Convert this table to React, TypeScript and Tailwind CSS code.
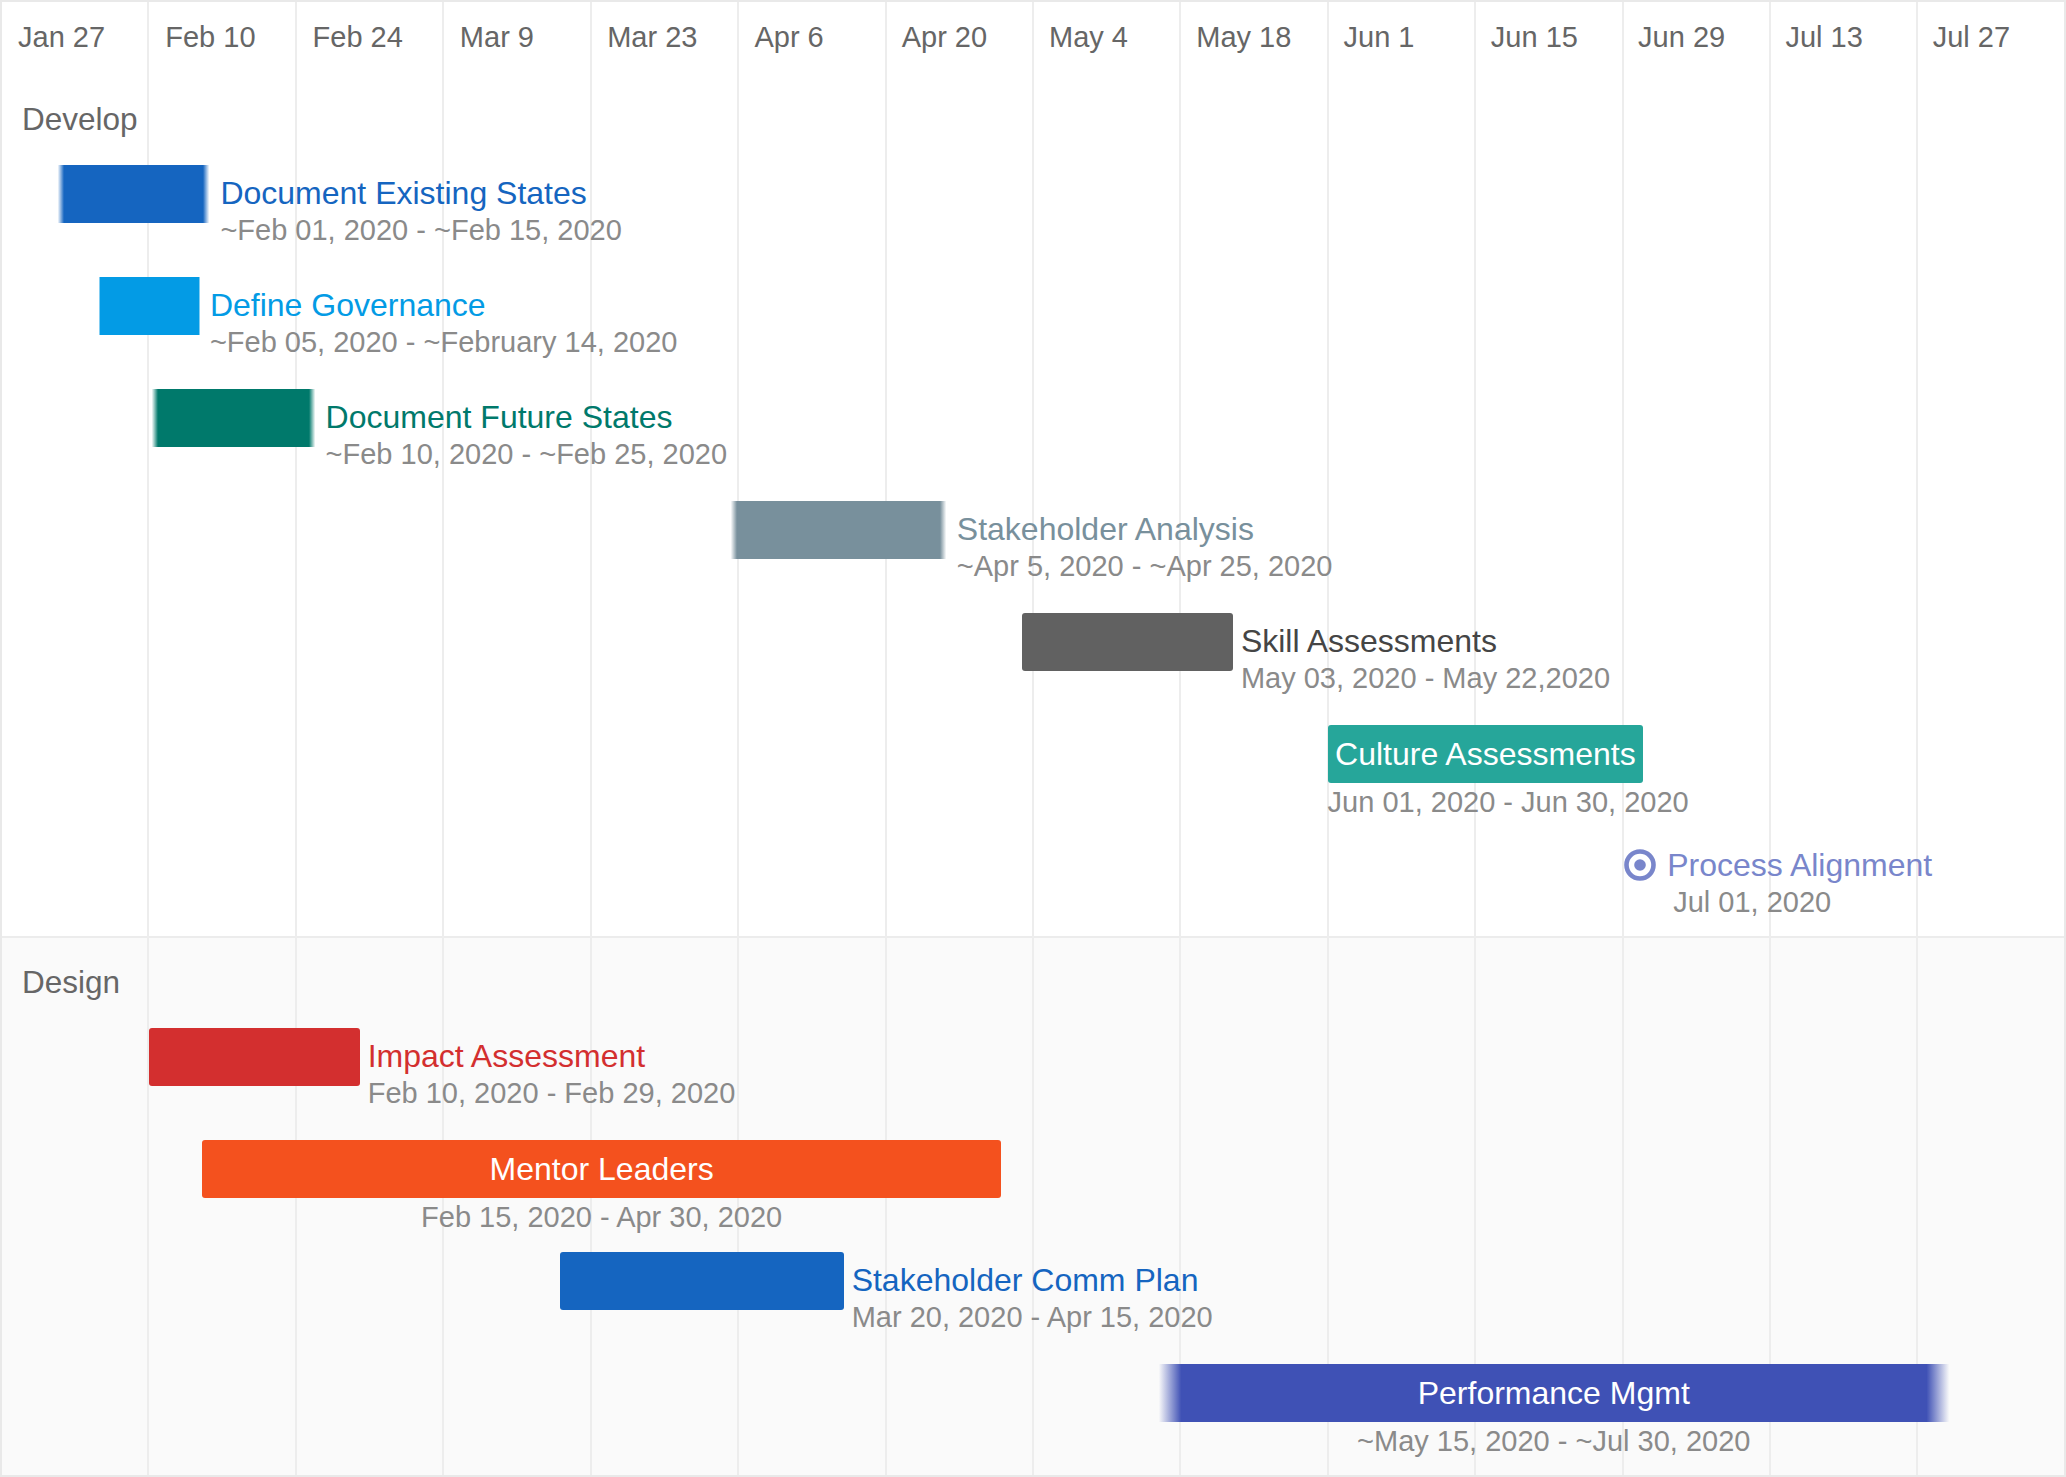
import React from "react";

const DAY_PX = 2062 / 14 / 14;
const ORIGIN = Date.UTC(2020, 0, 27);

const HEADER = [
  "Jan 27",
  "Feb 10",
  "Feb 24",
  "Mar 9",
  "Mar 23",
  "Apr 6",
  "Apr 20",
  "May 4",
  "May 18",
  "Jun 1",
  "Jun 15",
  "Jun 29",
  "Jul 13",
  "Jul 27",
];

type Task = {
  title: string;
  dates: string;
  start: [number, number];
  end?: [number, number];
  color: string;
  textColor?: string;
  fuzzy?: boolean;
  approx?: boolean;
  rounded?: boolean;
  inside?: boolean;
  dateAlign?: "start" | "center";
  milestone?: boolean;
};

const DEVELOP: Task[] = [
  {
    title: "Document Existing States",
    dates: "~Feb 01, 2020 - ~Feb 15, 2020",
    start: [2, 1],
    end: [2, 15],
    color: "#1565c0",
    fuzzy: true,
  },
  {
    title: "Define Governance",
    dates: "~Feb 05, 2020 - ~February 14, 2020",
    start: [2, 5],
    end: [2, 14],
    color: "#039be5",
    approx: true,
  },
  {
    title: "Document Future States",
    dates: "~Feb 10, 2020 - ~Feb 25, 2020",
    start: [2, 10],
    end: [2, 25],
    color: "#00796b",
    fuzzy: true,
  },
  {
    title: "Stakeholder Analysis",
    dates: "~Apr 5, 2020 - ~Apr 25, 2020",
    start: [4, 5],
    end: [4, 25],
    color: "#78909c",
    fuzzy: true,
  },
  {
    title: "Skill Assessments",
    dates: "May 03, 2020 - May 22,2020",
    start: [5, 3],
    end: [5, 22],
    color: "#616161",
    textColor: "#454545",
    rounded: true,
  },
  {
    title: "Culture Assessments",
    dates: "Jun 01, 2020 - Jun 30, 2020",
    start: [6, 1],
    end: [6, 30],
    color: "#26a69a",
    rounded: true,
    inside: true,
    dateAlign: "start",
  },
  {
    title: "Process Alignment",
    dates: "Jul 01, 2020",
    start: [7, 1],
    color: "#7986cb",
    milestone: true,
  },
];

const DESIGN: Task[] = [
  {
    title: "Impact Assessment",
    dates: "Feb 10, 2020 - Feb 29, 2020",
    start: [2, 10],
    end: [2, 29],
    color: "#d32f2f",
    rounded: true,
  },
  {
    title: "Mentor Leaders",
    dates: "Feb 15, 2020 - Apr 30, 2020",
    start: [2, 15],
    end: [4, 30],
    color: "#f4511e",
    rounded: true,
    inside: true,
  },
  {
    title: "Stakeholder Comm Plan",
    dates: "Mar 20, 2020 - Apr 15, 2020",
    start: [3, 20],
    end: [4, 15],
    color: "#1565c0",
    rounded: true,
  },
  {
    title: "Performance Mgmt",
    dates: "~May 15, 2020 - ~Jul 30, 2020",
    start: [5, 15],
    end: [7, 30],
    color: "#3f51b5",
    fuzzy: true,
    inside: true,
  },
];

function dayX([m, d]: [number, number]) {
  const days = (Date.UTC(2020, m - 1, d) - ORIGIN) / 86400000;
  return days * DAY_PX;
}

// approximate dates fade in and out at both ends of the bar
function barStyle(t: Task, width: number): React.CSSProperties {
  if (t.approx) {
    return {
      width,
      background: `linear-gradient(to right, transparent 2px, ${t.color} 3px, ${t.color} calc(100% - 3px), transparent calc(100% - 2px))`,
    };
  }
  if (!t.fuzzy) return { width, background: t.color };
  const f = Math.max(9, width * 0.04);
  const z = f * 0.3;
  return {
    width,
    background: `linear-gradient(to right, transparent ${z}px, ${t.color} ${f}px, ${t.color} calc(100% - ${f}px), transparent calc(100% - ${z}px))`,
  };
}

function MilestoneIcon({ color }: { color: string }) {
  return (
    <svg width="32" height="32" viewBox="0 0 32 32" className="shrink-0">
      <circle cx="16" cy="16" r="13.5" fill="none" stroke={color} strokeWidth="4.6" />
      <circle cx="16" cy="16" r="5.8" fill={color} />
    </svg>
  );
}

function TaskRow({ task }: { task: Task }) {
  const left = dayX(task.start);

  if (task.milestone) {
    return (
      <div className="relative z-10 flex h-[112px] items-start">
        <div className="flex items-start" style={{ marginLeft: left - 19 }}>
          <div className="mt-[12px]">
            <MilestoneIcon color={task.color} />
          </div>
          <div className="ml-[11px] flex flex-col whitespace-nowrap">
            <div className="mt-[9px] h-[39px] text-[32px] leading-[39px]" style={{ color: task.color }}>
              {task.title}
            </div>
            <div className="h-[34px] pl-[6px] text-[29px] leading-[34px] text-[#8a8a8a]">{task.dates}</div>
          </div>
        </div>
      </div>
    );
  }

  const endDay = task.end!;
  const right = dayX([endDay[0], endDay[1] + 1]);
  const width = right - left;

  if (task.inside) {
    return (
      <div className="relative z-10 flex h-[112px] items-start">
        <div
          className={`flex flex-col ${task.dateAlign === "start" ? "items-start" : "items-center"}`}
          style={{ marginLeft: left, width }}
        >
          <div
            className={`flex h-[58px] shrink-0 items-center justify-center whitespace-nowrap text-[32px] text-white ${
              task.rounded ? "rounded-[3px]" : ""
            }`}
            style={barStyle(task, width)}
          >
            {task.title}
          </div>
          <div className="mt-[2px] h-[34px] whitespace-nowrap text-[29px] leading-[34px] text-[#8a8a8a]">
            {task.dates}
          </div>
        </div>
      </div>
    );
  }

  return (
    <div className="relative z-10 flex h-[112px] items-start">
      <div
        className={`h-[58px] shrink-0 ${task.rounded ? "rounded-[3px]" : ""}`}
        style={{ marginLeft: left, ...barStyle(task, width) }}
      />
      <div className="ml-[8px] flex flex-col whitespace-nowrap">
        <div
          className="mt-[9px] h-[39px] text-[32px] leading-[39px]"
          style={{ color: task.textColor ?? task.color }}
        >
          {task.title}
        </div>
        <div className="h-[34px] text-[29px] leading-[34px] text-[#8a8a8a]">{task.dates}</div>
      </div>
    </div>
  );
}

function Section({ label, tasks, className }: { label: string; tasks: Task[]; className: string }) {
  return (
    <div className={className}>
      <div className="pl-[20px] pt-[25px]">
        <div className="h-[38px] text-[31.5px] leading-[38px] text-[#666666]">{label}</div>
      </div>
      <div className="mt-[27px] flex flex-col">
        {tasks.map((t) => (
          <TaskRow key={t.title} task={t} />
        ))}
      </div>
    </div>
  );
}

export default function App() {
  return (
    <div
      className="relative flex h-[1477px] w-[2066px] flex-col overflow-hidden border-2 border-[#e9e9e9] bg-white"
      style={{ fontFamily: '"Liberation Sans", Arial, sans-serif' }}
    >
      {/* vertical week grid, behind the bars */}
      <div className="pointer-events-none absolute inset-0 flex">
        {HEADER.map((h, i) => (
          <div key={h} className={`h-full flex-1 ${i > 0 ? "border-l-2 border-[#ededed]" : ""}`} />
        ))}
      </div>

      <div className="relative z-10 flex h-[73px] shrink-0">
        {HEADER.map((h) => (
          <div key={h} className="flex flex-1 items-center pb-[2px] pl-[16px] text-[29px] text-[#666666]">
            {h}
          </div>
        ))}
      </div>

      <Section label="Develop" tasks={DEVELOP} className="h-[863px] shrink-0 border-b-2 border-[#ececec]" />
      <Section label="Design" tasks={DESIGN} className="flex-1 bg-[#fafafa]" />
    </div>
  );
}
